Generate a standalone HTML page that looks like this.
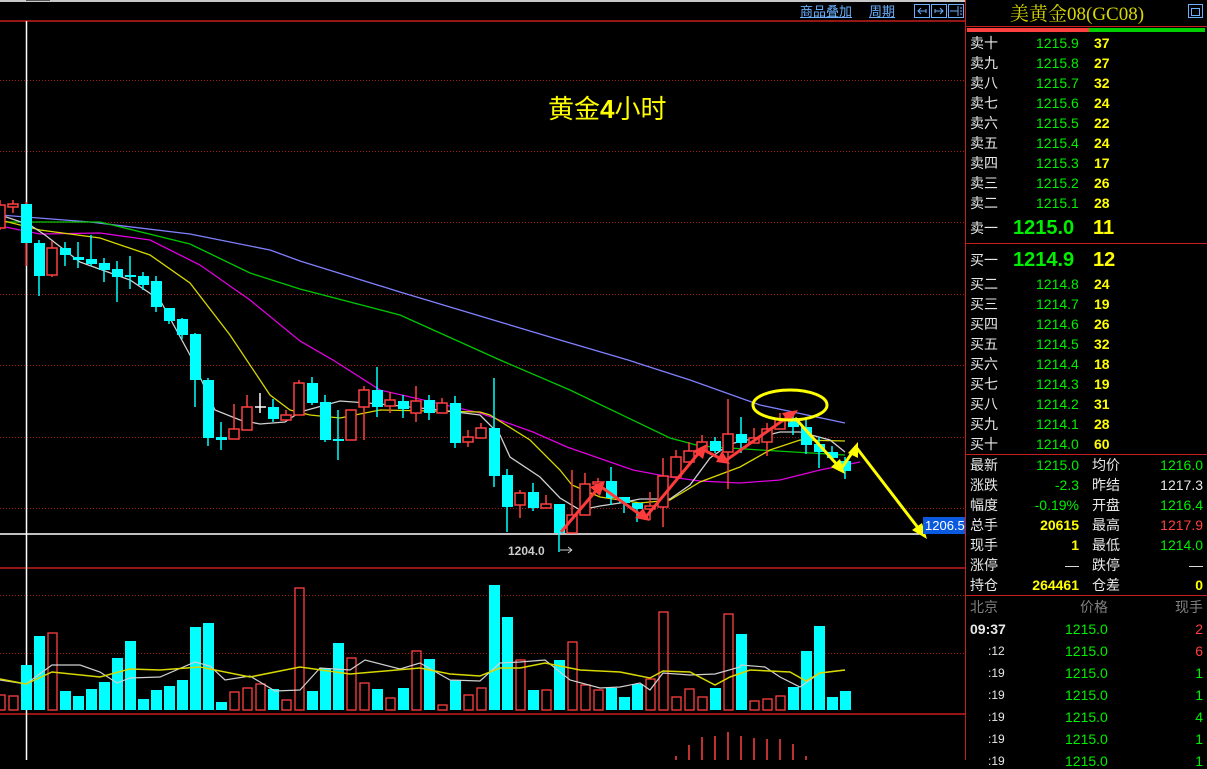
<!DOCTYPE html>
<html><head><meta charset="utf-8"><style>
body{margin:0;background:#000;width:1207px;height:760px;overflow:hidden;position:relative;font-family:"Liberation Sans","Noto Sans CJK SC",sans-serif}
.t{position:absolute;white-space:nowrap;font-size:14px;line-height:16px}
.w{color:#e8e8e8}.g{color:#00ee00}.y{color:#ffff00}.r{color:#ff4040}.gr{color:#808080}
.b{font-weight:bold}
</style></head><body>
<svg width="1207" height="760" style="position:absolute;left:0;top:0">
<rect x="0" y="0" width="965" height="2" fill="#c8c8c8"/>
<rect x="26" y="0" width="24" height="1" fill="#555"/>
<line x1="0" y1="21" x2="965" y2="21" stroke="#c81e1e" stroke-width="1.5"/>
<g stroke="#a01818" stroke-dasharray="1,2" stroke-width="1">
<line x1="0" y1="80.5" x2="965" y2="80.5"/><line x1="0" y1="151.5" x2="965" y2="151.5"/>
<line x1="0" y1="222.5" x2="965" y2="222.5"/><line x1="0" y1="294.5" x2="965" y2="294.5"/>
<line x1="0" y1="365.5" x2="965" y2="365.5"/><line x1="0" y1="437.5" x2="965" y2="437.5"/>
<line x1="0" y1="508.5" x2="965" y2="508.5"/>
<line x1="0" y1="595.5" x2="965" y2="595.5"/><line x1="0" y1="653.5" x2="965" y2="653.5"/>
</g>
<line x1="0" y1="568" x2="965" y2="568" stroke="#c81e1e" stroke-width="1.5"/>
<line x1="0" y1="714" x2="965" y2="714" stroke="#c81e1e" stroke-width="1.5"/>
<line x1="965.5" y1="0" x2="965.5" y2="760" stroke="#c81e1e"/>
<line x1="26.5" y1="21" x2="26.5" y2="760" stroke="#fff" stroke-width="1.5"/>
<line x1="0" y1="534" x2="920" y2="534" stroke="#fff" stroke-width="1.5"/>

<!-- MAs -->
<g fill="none" stroke-width="1.3">
<polyline stroke="#8080ff" points="0,215 90,222 190,234 270,250 300,261 400,292 500,322 560,340 628,360 690,380 760,405 845,423"/>
<polyline stroke="#00c800" points="0,222 100,222 190,244 250,273 300,289 400,315 500,360 570,390 670,438 700,446 760,450 845,455"/>
<polyline stroke="#e000e0" points="0,226 40,234 100,233 150,240 200,265 250,300 300,341 333,360 380,390 480,413 533,432 567,447 633,470 670,477 700,481 740,483 780,480 820,470 860,462"/>
<polyline stroke="#d8d800" points="0,220 40,230 100,238 150,255 190,283 230,335 270,395 290,410 310,415 340,418 380,410 480,412 490,415 530,440 560,470 572,485 600,497 640,503 670,500 700,482 740,467 770,450 800,440 845,441"/>
<polyline stroke="#d0d0d0" points="0,215 30,225 45,235 80,262 130,280 160,300 190,355 215,410 240,420 260,424 285,422 300,412 340,401 380,404 440,410 480,415 500,435 510,457 540,477 560,498 580,510 600,506 620,503 640,499 670,499 690,485 710,458 730,444 760,437 780,432 800,432 830,440 845,452"/>
</g>

<!-- candles -->
<g id="c"></g>
<g stroke="#ff4040" stroke-width="1.5" fill="#000">
<line x1="0" y1="200" x2="0" y2="230"/><rect x="-5" y="205" width="10" height="23"/>
<line x1="13" y1="200" x2="13" y2="213"/><rect x="8" y="204" width="10" height="3"/>
<line x1="52" y1="241" x2="52" y2="277"/><rect x="47" y="248" width="10" height="27"/>
<line x1="234" y1="404" x2="234" y2="439"/><rect x="229" y="429" width="10" height="10"/>
<line x1="247" y1="395" x2="247" y2="430"/><rect x="242" y="407" width="10" height="23"/>
<line x1="286" y1="410" x2="286" y2="420"/><rect x="281" y="415" width="10" height="5"/>
<line x1="299" y1="380" x2="299" y2="415"/><rect x="294" y="383" width="10" height="32"/>
<line x1="351" y1="410" x2="351" y2="440"/><rect x="346" y="410" width="10" height="30"/>
<line x1="364" y1="386" x2="364" y2="440"/><rect x="359" y="390" width="10" height="17"/>
<line x1="390" y1="392" x2="390" y2="413"/><rect x="385" y="400" width="10" height="6"/>
<line x1="416" y1="386" x2="416" y2="422"/><rect x="411" y="401" width="10" height="12"/>
<line x1="442" y1="398" x2="442" y2="413"/><rect x="437" y="403" width="10" height="10"/>
<line x1="468" y1="430" x2="468" y2="447"/><rect x="463" y="437" width="10" height="5"/>
<line x1="481" y1="423" x2="481" y2="438"/><rect x="476" y="428" width="10" height="10"/>
<line x1="520" y1="490" x2="520" y2="518"/><rect x="515" y="493" width="10" height="12"/>
<line x1="546" y1="495" x2="546" y2="508"/><rect x="541" y="504" width="10" height="4"/>
<line x1="572" y1="470" x2="572" y2="533"/><rect x="567" y="515" width="10" height="18"/>
<line x1="585" y1="473" x2="585" y2="515"/><rect x="580" y="484" width="10" height="31"/>
<line x1="598" y1="478" x2="598" y2="484"/><rect x="593" y="482" width="10" height="2"/>
<line x1="650" y1="492" x2="650" y2="520"/><rect x="645" y="506" width="10" height="3"/>
<line x1="663" y1="458" x2="663" y2="527"/><rect x="658" y="476" width="10" height="31"/>
<line x1="676" y1="450" x2="676" y2="477"/><rect x="671" y="457" width="10" height="20"/>
<line x1="689" y1="442" x2="689" y2="462"/><rect x="684" y="451" width="10" height="11"/>
<line x1="702" y1="435" x2="702" y2="451"/><rect x="697" y="442" width="10" height="9"/>
<line x1="728" y1="399" x2="728" y2="489"/><rect x="723" y="434" width="10" height="18"/>
<line x1="754" y1="428" x2="754" y2="443"/><rect x="749" y="438" width="10" height="5"/>
<line x1="767" y1="423" x2="767" y2="456"/><rect x="762" y="429" width="10" height="13"/>
<line x1="780" y1="413" x2="780" y2="429"/><rect x="775" y="419" width="10" height="10"/>
</g>
<g stroke="#00ffff" stroke-width="1.5" fill="#00ffff">
<line x1="26" y1="202" x2="26" y2="266" stroke="#ff2020"/><rect x="21" y="204" width="11" height="39" stroke="none"/>
<line x1="39" y1="240" x2="39" y2="296"/><rect x="34" y="243" width="11" height="33" stroke="none"/>
<line x1="65" y1="242" x2="65" y2="266"/><rect x="60" y="248" width="11" height="7" stroke="none"/>
<line x1="78" y1="242" x2="78" y2="268"/><rect x="73" y="257" width="11" height="3" stroke="none"/>
<line x1="91" y1="235" x2="91" y2="266"/><rect x="86" y="259" width="11" height="5" stroke="none"/>
<line x1="104" y1="258" x2="104" y2="282"/><rect x="99" y="263" width="11" height="7" stroke="none"/>
<line x1="117" y1="261" x2="117" y2="302"/><rect x="112" y="269" width="11" height="8" stroke="none"/>
<line x1="130" y1="256" x2="130" y2="289"/><rect x="125" y="275" width="11" height="2" stroke="none"/>
<line x1="143" y1="272" x2="143" y2="290"/><rect x="138" y="276" width="11" height="9" stroke="none"/>
<line x1="156" y1="276" x2="156" y2="312"/><rect x="151" y="281" width="11" height="26" stroke="none"/>
<line x1="169" y1="308" x2="169" y2="324"/><rect x="164" y="308" width="11" height="13" stroke="none"/>
<line x1="182" y1="318" x2="182" y2="339"/><rect x="177" y="319" width="11" height="16" stroke="none"/>
<line x1="195" y1="333" x2="195" y2="407"/><rect x="190" y="334" width="11" height="46" stroke="none"/>
<line x1="208" y1="378" x2="208" y2="446"/><rect x="203" y="380" width="11" height="58" stroke="none"/>
<line x1="221" y1="422" x2="221" y2="450"/><rect x="216" y="437" width="11" height="3" stroke="none"/>
<line x1="260" y1="393" x2="260" y2="413" stroke="#fff"/><line x1="255" y1="407" x2="266" y2="407" stroke="#fff"/>
<line x1="273" y1="399" x2="273" y2="422"/><rect x="268" y="407" width="11" height="12" stroke="none"/>
<line x1="312" y1="377" x2="312" y2="405"/><rect x="307" y="383" width="11" height="20" stroke="none"/>
<line x1="325" y1="395" x2="325" y2="442"/><rect x="320" y="402" width="11" height="38" stroke="none"/>
<line x1="338" y1="410" x2="338" y2="460"/><rect x="333" y="439" width="11" height="2" stroke="none"/>
<line x1="377" y1="367" x2="377" y2="417"/><rect x="372" y="390" width="11" height="17" stroke="none"/>
<line x1="403" y1="395" x2="403" y2="418"/><rect x="398" y="401" width="11" height="8" stroke="none"/>
<line x1="429" y1="395" x2="429" y2="420"/><rect x="424" y="400" width="11" height="13" stroke="none"/>
<line x1="455" y1="396" x2="455" y2="448"/><rect x="450" y="403" width="11" height="40" stroke="none"/>
<line x1="494" y1="378" x2="494" y2="487"/><rect x="489" y="428" width="11" height="48" stroke="none"/>
<line x1="507" y1="469" x2="507" y2="532"/><rect x="502" y="475" width="11" height="32" stroke="none"/>
<line x1="533" y1="483" x2="533" y2="511"/><rect x="528" y="492" width="11" height="16" stroke="none"/>
<line x1="559" y1="504" x2="559" y2="552"/><rect x="554" y="504" width="11" height="29" stroke="none"/>
<line x1="611" y1="467" x2="611" y2="505"/><rect x="606" y="481" width="11" height="17" stroke="none"/>
<line x1="624" y1="497" x2="624" y2="513"/><rect x="619" y="497" width="11" height="6" stroke="none"/>
<line x1="637" y1="503" x2="637" y2="522"/><rect x="632" y="503" width="11" height="6" stroke="none"/>
<line x1="715" y1="437" x2="715" y2="453"/><rect x="710" y="441" width="11" height="10" stroke="none"/>
<line x1="741" y1="417" x2="741" y2="453"/><rect x="736" y="434" width="11" height="9" stroke="none"/>
<line x1="793" y1="413" x2="793" y2="435"/><rect x="788" y="418" width="11" height="9" stroke="none"/>
<line x1="806" y1="418" x2="806" y2="454"/><rect x="801" y="427" width="11" height="18" stroke="none"/>
<line x1="819" y1="437" x2="819" y2="468"/><rect x="814" y="444" width="11" height="8" stroke="none"/>
<line x1="832" y1="446" x2="832" y2="458"/><rect x="827" y="452" width="11" height="6" stroke="none"/>
<line x1="845" y1="457" x2="845" y2="479"/><rect x="840" y="461" width="11" height="10" stroke="none"/>
</g>

<!-- arrows -->
<g stroke="#ff3c3c" stroke-width="3" fill="#ff3c3c">
<polyline fill="none" points="561,532 600,486 645,518 702,449 725,461 792,414"/>
<polygon stroke="none" points="605,481 590,487 600,496"/>
<polygon stroke="none" points="650,521 635,518 643,508"/>
<polygon stroke="none" points="707,444 693,451 703,459"/>
<polygon stroke="none" points="730,464 716,462 722,451"/>
<polygon stroke="none" points="798,410 782,413 789,423"/>
</g>
<g stroke="#ffff00" stroke-width="3" fill="#ffff00">
<polyline fill="none" points="795,418 841,469 856,447 922,533"/>
<polygon stroke="none" points="845,474 831,467 840,459"/>
<polygon stroke="none" points="858,442 858,458 848,453"/>
<polygon stroke="none" points="927,539 912,530 922,523"/>
<ellipse cx="790" cy="405" rx="37" ry="15" fill="none"/>
</g>

<!-- volume -->
<g fill="#00ffff">
<rect x="21" y="665" width="11" height="45"/><rect x="34" y="636" width="11" height="74"/>
<rect x="60" y="691" width="11" height="19"/><rect x="73" y="696" width="11" height="14"/>
<rect x="86" y="689" width="11" height="21"/><rect x="99" y="682" width="11" height="28"/>
<rect x="112" y="658" width="11" height="52"/><rect x="125" y="641" width="11" height="69"/>
<rect x="138" y="699" width="11" height="11"/><rect x="151" y="690" width="11" height="20"/>
<rect x="164" y="686" width="11" height="24"/><rect x="177" y="680" width="11" height="30"/>
<rect x="190" y="627" width="11" height="83"/><rect x="203" y="623" width="11" height="87"/>
<rect x="216" y="702" width="11" height="8"/><rect x="268" y="689" width="11" height="21"/>
<rect x="307" y="691" width="11" height="19"/><rect x="320" y="668" width="11" height="42"/>
<rect x="333" y="643" width="11" height="67"/><rect x="372" y="689" width="11" height="21"/>
<rect x="398" y="688" width="11" height="22"/><rect x="424" y="659" width="11" height="51"/>
<rect x="450" y="680" width="11" height="30"/><rect x="489" y="585" width="11" height="125"/>
<rect x="502" y="617" width="11" height="93"/><rect x="528" y="690" width="11" height="20"/>
<rect x="554" y="660" width="11" height="50"/><rect x="606" y="688" width="11" height="22"/>
<rect x="619" y="697" width="11" height="13"/><rect x="632" y="684" width="11" height="26"/>
<rect x="710" y="688" width="11" height="22"/><rect x="736" y="634" width="11" height="76"/>
<rect x="788" y="687" width="11" height="23"/><rect x="801" y="651" width="11" height="59"/>
<rect x="814" y="626" width="11" height="84"/><rect x="827" y="697" width="11" height="13"/>
<rect x="840" y="691" width="11" height="19"/>
</g>
<g fill="none" stroke="#ff4040" stroke-width="1.3">
<rect x="-4" y="695" width="9" height="15"/><rect x="9" y="696" width="9" height="14"/>
<rect x="48" y="633" width="9" height="77"/><rect x="230" y="692" width="9" height="18"/>
<rect x="243" y="688" width="9" height="22"/><rect x="256" y="684" width="9" height="26"/>
<rect x="282" y="700" width="9" height="10"/><rect x="295" y="588" width="9" height="122"/>
<rect x="347" y="658" width="9" height="52"/><rect x="360" y="683" width="9" height="27"/>
<rect x="386" y="698" width="9" height="12"/><rect x="412" y="651" width="9" height="59"/>
<rect x="438" y="705" width="9" height="5"/><rect x="464" y="695" width="9" height="15"/>
<rect x="477" y="688" width="9" height="22"/><rect x="516" y="660" width="9" height="50"/>
<rect x="542" y="690" width="9" height="20"/><rect x="568" y="642" width="9" height="68"/>
<rect x="581" y="685" width="9" height="25"/><rect x="594" y="690" width="9" height="20"/>
<rect x="646" y="679" width="9" height="31"/><rect x="659" y="612" width="9" height="98"/>
<rect x="672" y="697" width="9" height="13"/><rect x="685" y="689" width="9" height="21"/>
<rect x="698" y="697" width="9" height="13"/><rect x="724" y="614" width="9" height="96"/>
<rect x="750" y="701" width="9" height="9"/><rect x="763" y="699" width="9" height="11"/>
<rect x="776" y="696" width="9" height="14"/>
</g>
<polyline fill="none" stroke="#d0d0d0" stroke-width="1.2" points="0,680 26,684 52,665 80,665 100,672 117,683 130,678 160,677 195,662 210,666 225,680 250,676 275,691 300,690 320,668 350,670 365,660 400,669 420,663 450,680 480,681 500,663 520,662 545,660 570,680 600,688 620,687 640,683 650,690 663,673 690,675 715,674 740,667 741,665 765,667 780,677 800,687 810,680 820,673 845,670"/>
<polyline fill="none" stroke="#d8d800" stroke-width="1.5" points="0,679 26,684 52,672 100,677 130,669 160,670 200,667 250,677 300,667 350,674 420,668 450,674 480,676 500,668 520,668 545,663 580,670 620,672 650,678 663,671 690,672 715,685 730,677 750,670 790,672 806,681 820,673 845,670"/>
<g stroke="#ff4040" stroke-width="1.5">
<line x1="676" y1="756" x2="676" y2="760"/><line x1="689" y1="745" x2="689" y2="760"/><line x1="702" y1="737" x2="702" y2="760"/><line x1="715" y1="736" x2="715" y2="760"/><line x1="728" y1="732" x2="728" y2="760"/><line x1="741" y1="736" x2="741" y2="760"/><line x1="754" y1="738" x2="754" y2="760"/><line x1="767" y1="739" x2="767" y2="760"/><line x1="780" y1="739" x2="780" y2="760"/><line x1="793" y1="744" x2="793" y2="760"/><line x1="806" y1="756" x2="806" y2="760"/>
</g>

<!-- toolbar icons -->
<g stroke="#6ab0ff" fill="none" stroke-width="1">
<rect x="914.5" y="4.5" width="15" height="13"/><rect x="931.5" y="4.5" width="15" height="13"/><rect x="948.5" y="4.5" width="15" height="13"/>
<path d="M926 11H918M921 8L918 11L921 14M926 9V13"/>
<path d="M935 11H943M940 8L943 11L940 14M935 9V13"/>
<path d="M950 11H958M958 6V16M960 8H962M960 11H962M960 14H962"/>
<rect x="1188.5" y="4.5" width="14" height="13"/><rect x="1191.5" y="8.5" width="8" height="7"/>
</g>
<!-- right panel -->
<rect x="967" y="28" width="122" height="4" fill="#ff4040"/><rect x="1089" y="28" width="116" height="4" fill="#00d000"/>
<line x1="966" y1="26.5" x2="1207" y2="26.5" stroke="#c81e1e"/>
<g stroke="#c81e1e"><line x1="966" y1="243.5" x2="1207" y2="243.5"/><line x1="966" y1="454.5" x2="1207" y2="454.5"/><line x1="966" y1="595.5" x2="1207" y2="595.5"/></g>
<rect x="923" y="517" width="42" height="17" fill="#0a5ae0"/>
<line x1="560" y1="550" x2="572" y2="550" stroke="#ccc"/><line x1="572" y1="550" x2="568" y2="547" stroke="#ccc"/><line x1="572" y1="550" x2="568" y2="553" stroke="#ccc"/>
</svg>

<div class="t" style="left:800px;top:4px;font-size:13px;color:#6ab0ff;text-decoration:underline">商品叠加</div>
<div class="t" style="left:869px;top:4px;font-size:13px;color:#6ab0ff;text-decoration:underline">周期</div>
<div class="t" style="left:548px;top:94px;font-size:26px;line-height:30px;color:#ffff00">黄金<b>4</b>小时</div>
<div class="t b" style="left:508px;top:543px;font-size:12px;color:#ccc">1204.0</div>
<div class="t" style="left:925px;top:518px;font-size:13px;color:#fff">1206.5</div>
<div class="t" style="left:1010px;top:4px;font-size:19px;line-height:22px;color:#d8d800;font-family:'Liberation Serif','Noto Serif CJK SC',serif">美黄金08(GC08)</div>

<div style="position:absolute;left:970px;top:35px;font-size:14px">
<div class="t w" style="top:0">卖十</div><div class="t g" style="left:66px;top:0">1215.9</div><div class="t y b" style="left:124px;top:0">37</div>
<div class="t w" style="top:20px">卖九</div><div class="t g" style="left:66px;top:20px">1215.8</div><div class="t y b" style="left:124px;top:20px">27</div>
<div class="t w" style="top:40px">卖八</div><div class="t g" style="left:66px;top:40px">1215.7</div><div class="t y b" style="left:124px;top:40px">32</div>
<div class="t w" style="top:60px">卖七</div><div class="t g" style="left:66px;top:60px">1215.6</div><div class="t y b" style="left:124px;top:60px">24</div>
<div class="t w" style="top:80px">卖六</div><div class="t g" style="left:66px;top:80px">1215.5</div><div class="t y b" style="left:124px;top:80px">22</div>
<div class="t w" style="top:100px">卖五</div><div class="t g" style="left:66px;top:100px">1215.4</div><div class="t y b" style="left:124px;top:100px">24</div>
<div class="t w" style="top:120px">卖四</div><div class="t g" style="left:66px;top:120px">1215.3</div><div class="t y b" style="left:124px;top:120px">17</div>
<div class="t w" style="top:140px">卖三</div><div class="t g" style="left:66px;top:140px">1215.2</div><div class="t y b" style="left:124px;top:140px">26</div>
<div class="t w" style="top:160px">卖二</div><div class="t g" style="left:66px;top:160px">1215.1</div><div class="t y b" style="left:124px;top:160px">28</div>
<div class="t w" style="top:185px">卖一</div><div class="t g b" style="left:43px;top:182px;font-size:20px;line-height:22px">1215.0</div><div class="t y b" style="left:123px;top:182px;font-size:20px;line-height:22px">11</div>
<div class="t w" style="top:217px">买一</div><div class="t g b" style="left:43px;top:214px;font-size:20px;line-height:22px">1214.9</div><div class="t y b" style="left:123px;top:214px;font-size:20px;line-height:22px">12</div>
<div class="t w" style="top:241px">买二</div><div class="t g" style="left:66px;top:241px">1214.8</div><div class="t y b" style="left:124px;top:241px">24</div>
<div class="t w" style="top:261px">买三</div><div class="t g" style="left:66px;top:261px">1214.7</div><div class="t y b" style="left:124px;top:261px">19</div>
<div class="t w" style="top:281px">买四</div><div class="t g" style="left:66px;top:281px">1214.6</div><div class="t y b" style="left:124px;top:281px">26</div>
<div class="t w" style="top:301px">买五</div><div class="t g" style="left:66px;top:301px">1214.5</div><div class="t y b" style="left:124px;top:301px">32</div>
<div class="t w" style="top:321px">买六</div><div class="t g" style="left:66px;top:321px">1214.4</div><div class="t y b" style="left:124px;top:321px">18</div>
<div class="t w" style="top:341px">买七</div><div class="t g" style="left:66px;top:341px">1214.3</div><div class="t y b" style="left:124px;top:341px">19</div>
<div class="t w" style="top:361px">买八</div><div class="t g" style="left:66px;top:361px">1214.2</div><div class="t y b" style="left:124px;top:361px">31</div>
<div class="t w" style="top:381px">买九</div><div class="t g" style="left:66px;top:381px">1214.1</div><div class="t y b" style="left:124px;top:381px">28</div>
<div class="t w" style="top:401px">买十</div><div class="t g" style="left:66px;top:401px">1214.0</div><div class="t y b" style="left:124px;top:401px">60</div>
</div>

<div style="position:absolute;left:970px;top:457px;width:233px;height:140px">
<div class="t w" style="top:0">最新</div><div class="t g" style="right:124px;top:0">1215.0</div><div class="t w" style="left:122px;top:0">均价</div><div class="t g" style="right:0;top:0">1216.0</div>
<div class="t w" style="top:20px">涨跌</div><div class="t g" style="right:124px;top:20px">-2.3</div><div class="t w" style="left:122px;top:20px">昨结</div><div class="t w" style="right:0;top:20px">1217.3</div>
<div class="t w" style="top:40px">幅度</div><div class="t g" style="right:124px;top:40px">-0.19%</div><div class="t w" style="left:122px;top:40px">开盘</div><div class="t g" style="right:0;top:40px">1216.4</div>
<div class="t w" style="top:60px">总手</div><div class="t y b" style="right:124px;top:60px">20615</div><div class="t w" style="left:122px;top:60px">最高</div><div class="t r" style="right:0;top:60px">1217.9</div>
<div class="t w" style="top:80px">现手</div><div class="t y b" style="right:124px;top:80px">1</div><div class="t w" style="left:122px;top:80px">最低</div><div class="t g" style="right:0;top:80px">1214.0</div>
<div class="t w" style="top:100px">涨停</div><div class="t w" style="right:124px;top:100px">—</div><div class="t w" style="left:122px;top:100px">跌停</div><div class="t w" style="right:0;top:100px">—</div>
<div class="t w" style="top:120px">持仓</div><div class="t y b" style="right:124px;top:120px">264461</div><div class="t w" style="left:122px;top:120px">仓差</div><div class="t y b" style="right:0;top:120px">0</div>
</div>

<div style="position:absolute;left:970px;top:599px;width:233px;height:170px">
<div class="t gr" style="top:0">北京</div><div class="t gr" style="left:110px;top:0">价格</div><div class="t gr" style="right:0;top:0">现手</div>
<div class="t w b" style="top:22px">09:37</div><div class="t g" style="left:95px;top:22px">1215.0</div><div class="t r" style="right:0;top:22px">2</div>
<div class="t w" style="left:18px;top:44px;font-size:12px">:12</div><div class="t g" style="left:95px;top:44px">1215.0</div><div class="t r" style="right:0;top:44px">6</div>
<div class="t w" style="left:18px;top:66px;font-size:12px">:19</div><div class="t g" style="left:95px;top:66px">1215.0</div><div class="t g" style="right:0;top:66px">1</div>
<div class="t w" style="left:18px;top:88px;font-size:12px">:19</div><div class="t g" style="left:95px;top:88px">1215.0</div><div class="t g" style="right:0;top:88px">1</div>
<div class="t w" style="left:18px;top:110px;font-size:12px">:19</div><div class="t g" style="left:95px;top:110px">1215.0</div><div class="t g" style="right:0;top:110px">4</div>
<div class="t w" style="left:18px;top:132px;font-size:12px">:19</div><div class="t g" style="left:95px;top:132px">1215.0</div><div class="t g" style="right:0;top:132px">1</div>
<div class="t w" style="left:18px;top:154px;font-size:12px">:19</div><div class="t g" style="left:95px;top:154px">1215.0</div><div class="t g" style="right:0;top:154px">1</div>
</div>
</body></html>
